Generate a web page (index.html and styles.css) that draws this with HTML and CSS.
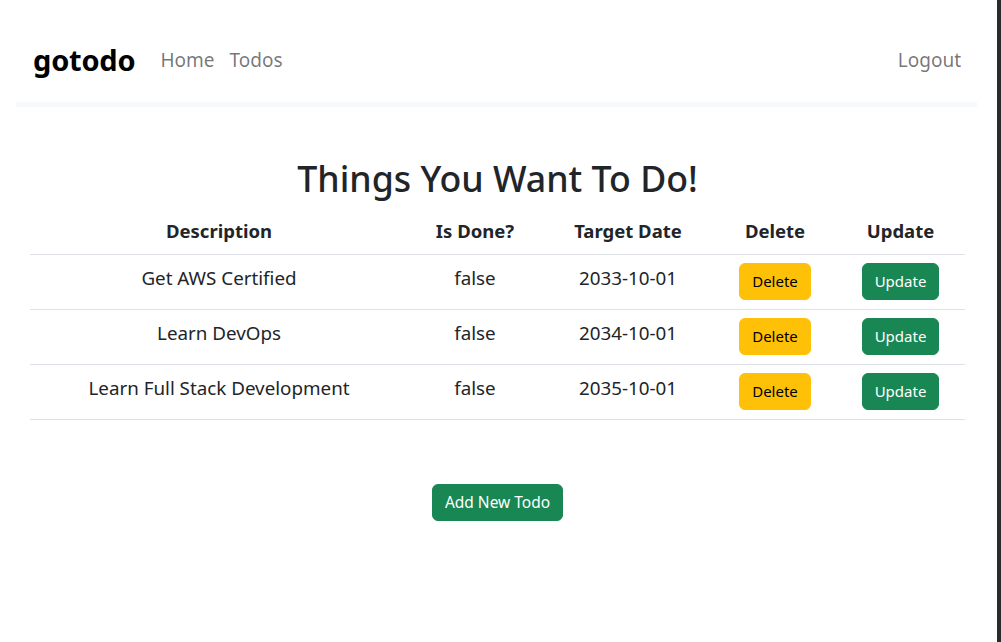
FILE: index.html
```html
<!DOCTYPE html>
<html lang="en">
<head>
<meta charset="utf-8">
<title>gotodo</title>
<link rel="stylesheet" href="styles.css">
</head>
<body>
<div class="window">
  <div class="page">
    <header class="header">
      <nav class="navbar">
        <a class="brand" href="#">gotodo</a>
        <ul class="nav-links">
          <li><a href="#">Home</a></li>
          <li><a href="#">Todos</a></li>
        </ul>
        <ul class="nav-links nav-right">
          <li><a href="#">Logout</a></li>
        </ul>
      </nav>
    </header>
    <main class="container">
      <h1 class="title">Things You Want To Do!</h1>
      <table class="todo-table">
        <colgroup>
          <col class="c-desc"><col class="c-done"><col class="c-date"><col class="c-del"><col class="c-upd">
        </colgroup>
        <thead>
          <tr><th>Description</th><th>Is Done?</th><th>Target Date</th><th>Delete</th><th>Update</th></tr>
        </thead>
        <tbody>
          <tr><td>Get AWS Certified</td><td>false</td><td>2033-10-01</td><td><button class="btn btn-warning">Delete</button></td><td><button class="btn btn-success">Update</button></td></tr>
          <tr><td>Learn DevOps</td><td>false</td><td>2034-10-01</td><td><button class="btn btn-warning">Delete</button></td><td><button class="btn btn-success">Update</button></td></tr>
          <tr><td>Learn Full Stack Development</td><td>false</td><td>2035-10-01</td><td><button class="btn btn-warning">Delete</button></td><td><button class="btn btn-success">Update</button></td></tr>
        </tbody>
      </table>
      <div class="add-row">
        <button class="btn btn-success btn-add">Add New Todo</button>
      </div>
    </main>
  </div>
  <div class="edge"></div>
</div>
</body>
</html>
```
FILE: styles.css
```css
* { box-sizing: border-box; }
html, body { margin: 0; padding: 0; height: 100%; }
body {
  font-family: "Noto Sans", "Open Sans", sans-serif;
  color: #212529;
  background: #fff;
  font-size: 16px;
  line-height: 1.5;
}
.window { display: flex; min-height: 642px; }
.page { flex: 1; min-width: 0; }
.edge { width: 4px; background: #2b2b2b; flex: none; }

.header {
  margin: 0 20px 0 16px;
  padding: 37px 16px 19px 17px;
  border-bottom: 5px solid #f8f9fa;
}
.navbar { display: flex; align-items: center; height: 46px; }
.brand {
  font-size: 29px;
  font-weight: 700;
  color: #000;
  text-decoration: none;
  margin-right: 25px;
  letter-spacing: -0.2px;
}
.nav-links { list-style: none; margin: 0; padding: 0; display: flex; gap: 15px; }
.nav-links a {
  font-size: 19px;
  color: rgba(0,0,0,.55);
  text-decoration: none;
}
.nav-right { margin-left: auto; }

.container { width: 935px; margin: 0 0 0 30px; padding-top: 50px; }
.title {
  font-size: 35.7px;
  font-weight: 500;
  line-height: 1.2;
  text-align: center;
  margin: 0 0 8px;
}
.todo-table {
  width: 100%;
  border-collapse: collapse;
  font-size: 18.8px;
  text-align: center;
  margin-bottom: 16px;
}
.c-desc { width: 378px; }
.c-done { width: 134px; }
.c-date { width: 172px; }
.c-del { width: 122px; }
.c-upd { width: 129px; }
.todo-table th, .todo-table td {
  padding: 8px;
  border-bottom: 1px solid #dee2e6;
  line-height: 30px;
}
.todo-table tbody td { padding-bottom: 9px; }
.todo-table th { vertical-align: bottom; font-weight: 700; font-size: 18.5px; }
.todo-table td { vertical-align: top; }

.btn {
  font-family: inherit;
  font-size: 15px;
  line-height: 23px;
  padding: 6px 12px;
  border: 1px solid transparent;
  border-radius: 6px;
  cursor: pointer;
  vertical-align: top;
}
.btn-warning { background: #ffc107; border-color: #ffc107; color: #000; }
.btn-success { background: #198754; border-color: #198754; color: #fff; }

.add-row { display: flex; justify-content: center; margin-top: 64px; }
.btn-add { font-size: 15.5px; }
```
